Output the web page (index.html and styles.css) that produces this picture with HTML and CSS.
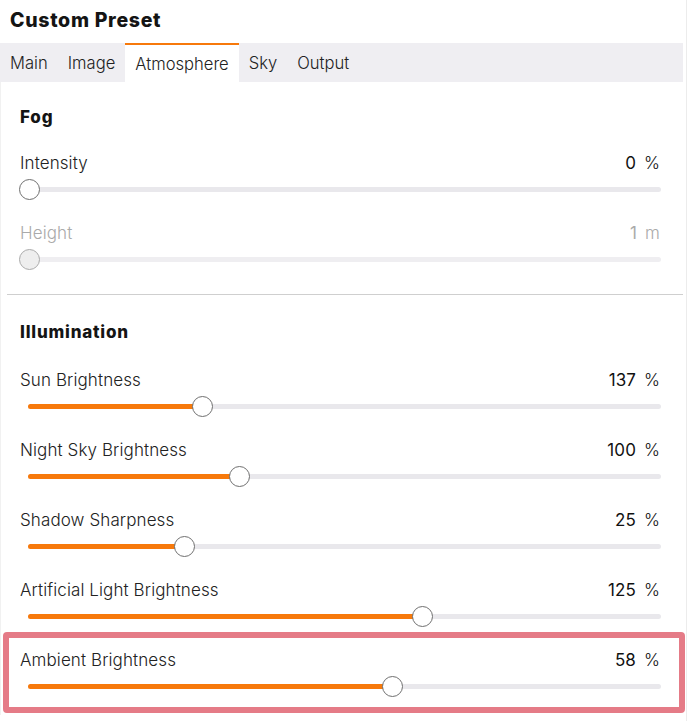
FILE: index.html
```html
<!DOCTYPE html>
<html>
<head>
<meta charset="utf-8">
<link rel="stylesheet" href="styles.css">
</head>
<body>
<div class="app">
  <h1 class="title">Custom Preset</h1>
  <div class="tabs">
    <div class="tab">Main</div>
    <div class="tab">Image</div>
    <div class="tab active">Atmosphere</div>
    <div class="tab">Sky</div>
    <div class="tab">Output</div>
  </div>
  <div class="panel">
    <section class="section fog">
      <h2 class="heading">Fog</h2>
      <div class="row">
        <div class="row-head"><span class="label">Intensity</span><span class="value">0<span class="unit">%</span></span></div>
        <div class="slider"><div class="track"><div class="fill" style="width:0%"></div></div><div class="thumb" style="left:calc(0.3% - 10.5px)"></div></div>
      </div>
      <div class="row disabled">
        <div class="row-head"><span class="label">Height</span><span class="value">1<span class="unit">m</span></span></div>
        <div class="slider"><div class="track"><div class="fill" style="width:0%"></div></div><div class="thumb" style="left:calc(0.3% - 10.5px)"></div></div>
      </div>
    </section>
    <hr class="divider">
    <section class="section illum">
      <h2 class="heading">Illumination</h2>
      <div class="row">
        <div class="row-head"><span class="label">Sun Brightness</span><span class="value">137<span class="unit">%</span></span></div>
        <div class="slider"><div class="track"><div class="fill" style="width:27.5%"></div></div><div class="thumb" style="left:calc(27.5% - 10.5px)"></div></div>
      </div>
      <div class="row">
        <div class="row-head"><span class="label">Night Sky Brightness</span><span class="value">100<span class="unit">%</span></span></div>
        <div class="slider"><div class="track"><div class="fill" style="width:33.4%"></div></div><div class="thumb" style="left:calc(33.4% - 10.5px)"></div></div>
      </div>
      <div class="row">
        <div class="row-head"><span class="label">Shadow Sharpness</span><span class="value">25<span class="unit">%</span></span></div>
        <div class="slider"><div class="track"><div class="fill" style="width:24.8%"></div></div><div class="thumb" style="left:calc(24.8% - 10.5px)"></div></div>
      </div>
      <div class="row">
        <div class="row-head"><span class="label">Artificial Light Brightness</span><span class="value">125<span class="unit">%</span></span></div>
        <div class="slider"><div class="track"><div class="fill" style="width:62.3%"></div></div><div class="thumb" style="left:calc(62.3% - 10.5px)"></div></div>
      </div>
      <div class="row highlighted">
        <div class="row-head"><span class="label">Ambient Brightness</span><span class="value">58<span class="unit">%</span></span></div>
        <div class="slider"><div class="track"><div class="fill" style="width:57.6%"></div></div><div class="thumb" style="left:calc(57.6% - 10.5px)"></div></div>
      </div>
    </section>
  </div>
</div>
</body>
</html>
```

FILE: styles.css
```css
* { box-sizing: border-box; }
html, body { margin: 0; padding: 0; background: #ffffff; }
body {
  font-family: Inter, "Noto Sans", "Liberation Sans", sans-serif;
  color: #222;
  width: 690px;
  height: 721px;
  overflow: hidden;
}
.app {
  width: 687px;
  height: 721px;
  border-right: 1px solid #ececec;
}
.title {
  margin: 0;
  height: 43px;
  padding: 8px 0 0 10px;
  font-size: 19.5px;
  font-weight: 800;
  line-height: 24px;
  color: #141414;
  letter-spacing: 0.7px;
}
.tabs {
  display: flex;
  width: 683px;
  height: 39px;
  background: #efeef2;
}
.tab {
  padding: 0 10px;
  font-size: 16.6px;
  line-height: 40px;
  font-weight: 300;
  color: #222;
}
.tab.active {
  background: #ffffff;
  border-top: 2px solid #f7790b;
  line-height: 38px;
}
.panel {
  width: 686px;
  border-left: 1px solid #f1f1f1;
}
.heading {
  margin: 0;
  padding-left: 19px;
  height: 30px;
  line-height: 30px;
  font-size: 17px;
  font-weight: 800;
  letter-spacing: 0.8px;
  color: #141414;
}
.fog { padding-top: 20px; }
.fog .heading { margin-bottom: 16px; }
.illum { padding-top: 22px; }
.illum .heading { margin-bottom: 18px; }
.divider {
  margin: 6px 3px 0 6px;
  border: 0;
  border-top: 1px solid #cfcfcf;
  height: 0;
}
.row {
  height: 70px;
  padding: 0 26px 0 19px;
}
.row-head {
  display: flex;
  justify-content: space-between;
  align-items: center;
  height: 29px;
  font-size: 17px;
  font-weight: 300;
  letter-spacing: 0.1px;
  color: #222;
}
.value { color: #111; font-weight: 400; }
.unit { margin-left: 8px; font-weight: 300; }
.disabled .row-head, .disabled .value { color: #aaaaaa; }
.slider {
  position: relative;
  height: 25px;
  margin: 0 -1px 0 8px;
}
.track {
  position: absolute;
  left: 0;
  right: 0;
  top: 10px;
  height: 5px;
  border-radius: 3px;
  background: #e9e8ec;
  overflow: hidden;
}
.fill {
  height: 100%;
  background: #f7790b;
}
.thumb {
  position: absolute;
  top: 2px;
  width: 21px;
  height: 21px;
  border-radius: 50%;
  background: #ffffff;
  border: 1px solid #6f6f6f;
}
.disabled .track { background: #efeef1; }
.disabled .thumb { background: #eeeeee; border-color: #aaaaaa; }
.highlighted { position: relative; }
.highlighted::after {
  content: "";
  position: absolute;
  left: 2px;
  right: 1px;
  top: -13px;
  bottom: 2px;
  border: 6px solid #e57b87;
  border-radius: 4px;
  pointer-events: none;
}
```
